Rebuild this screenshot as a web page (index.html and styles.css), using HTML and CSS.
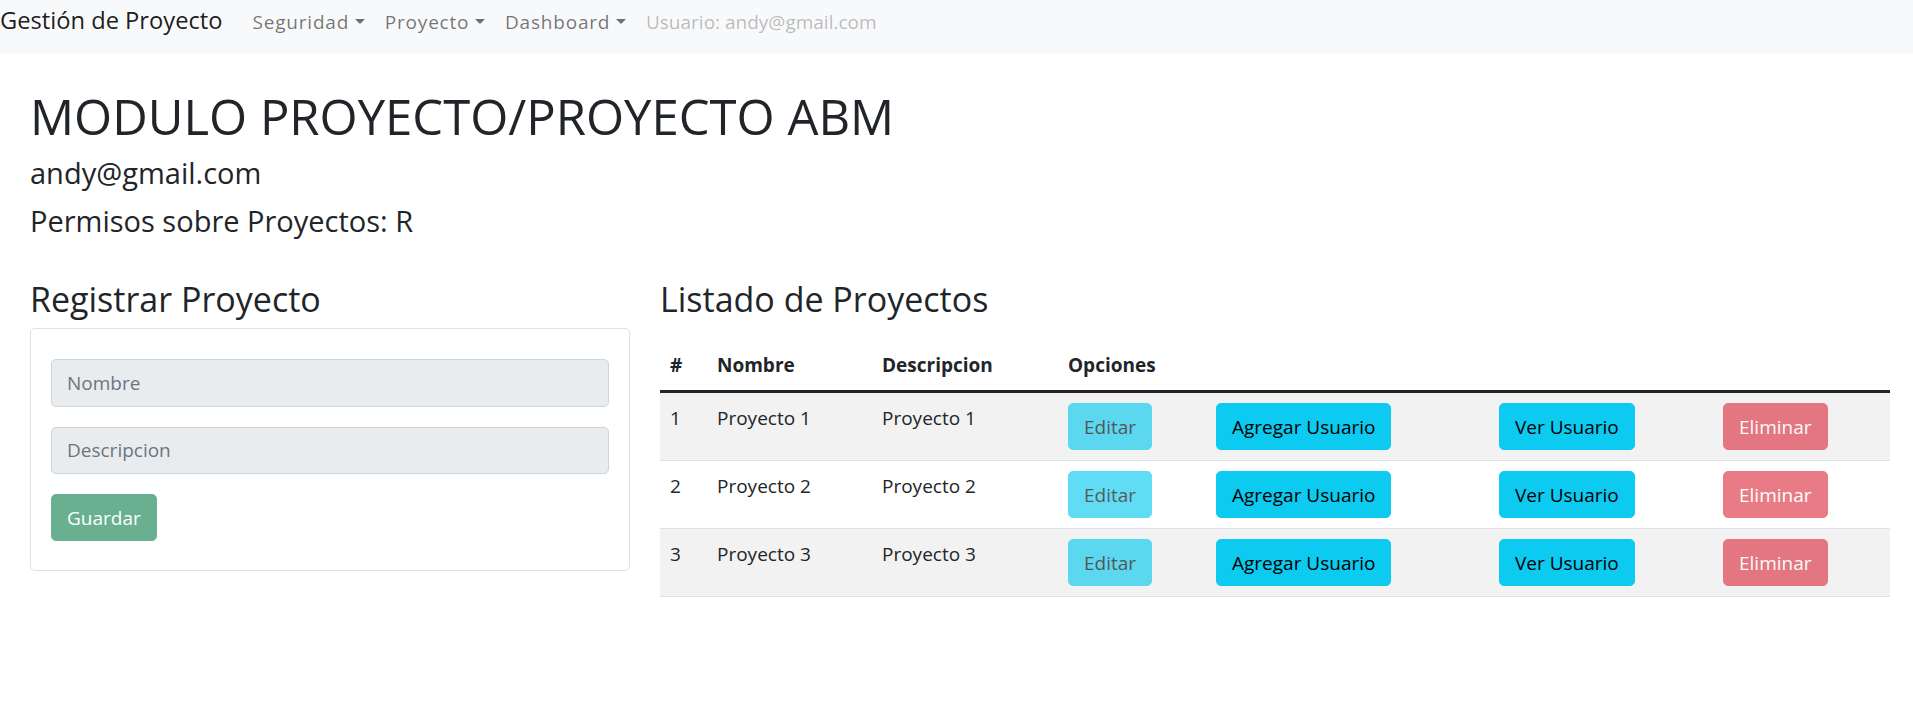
FILE: index.html
```html
<!DOCTYPE html>
<html lang="es">
<head>
<meta charset="utf-8">
<title>Gestión de Proyecto</title>
<link rel="stylesheet" href="styles.css">
</head>
<body>
<nav class="navbar">
  <a class="brand" href="#">Gestión de Proyecto</a>
  <a class="nav-link toggle" href="#">Seguridad</a>
  <a class="nav-link toggle" href="#">Proyecto</a>
  <a class="nav-link toggle" href="#">Dashboard</a>
  <span class="nav-link disabled">Usuario: andy@gmail.com</span>
</nav>

<main class="page">
  <h1 class="title">MODULO PROYECTO/PROYECTO ABM</h1>
  <h4 class="sub sub-user">andy@gmail.com</h4>
  <h4 class="sub">Permisos sobre Proyectos: R</h4>

  <div class="columns">
    <section class="col-left">
      <h3 class="section-title">Registrar Proyecto</h3>
      <div class="card">
        <input class="form-control" type="text" placeholder="Nombre" disabled>
        <input class="form-control" type="text" placeholder="Descripcion" disabled>
        <button class="btn btn-success disabled" type="button">Guardar</button>
      </div>
    </section>

    <section class="col-right">
      <h3 class="section-title">Listado de Proyectos</h3>
      <table class="table">
        <colgroup>
          <col class="c-num"><col class="c-name"><col class="c-desc"><col class="c-edit"><col class="c-add"><col class="c-ver"><col class="c-del">
        </colgroup>
        <thead>
          <tr><th>#</th><th>Nombre</th><th>Descripcion</th><th>Opciones</th><th></th><th></th><th></th></tr>
        </thead>
        <tbody>
          <tr class="striped">
            <td>1</td><td>Proyecto 1</td><td>Proyecto 1</td>
            <td><button class="btn btn-info disabled">Editar</button></td>
            <td><button class="btn btn-info">Agregar Usuario</button></td>
            <td><button class="btn btn-info">Ver Usuario</button></td>
            <td><button class="btn btn-danger disabled">Eliminar</button></td>
          </tr>
          <tr>
            <td>2</td><td>Proyecto 2</td><td>Proyecto 2</td>
            <td><button class="btn btn-info disabled">Editar</button></td>
            <td><button class="btn btn-info">Agregar Usuario</button></td>
            <td><button class="btn btn-info">Ver Usuario</button></td>
            <td><button class="btn btn-danger disabled">Eliminar</button></td>
          </tr>
          <tr class="striped">
            <td>3</td><td>Proyecto 3</td><td>Proyecto 3</td>
            <td><button class="btn btn-info disabled">Editar</button></td>
            <td><button class="btn btn-info">Agregar Usuario</button></td>
            <td><button class="btn btn-info">Ver Usuario</button></td>
            <td><button class="btn btn-danger disabled">Eliminar</button></td>
          </tr>
        </tbody>
      </table>
    </section>
  </div>
</main>
</body>
</html>
```
FILE: styles.css
```css
* { box-sizing: border-box; }

body {
  margin: 0;
  font-family: "Open Sans", "Noto Sans", sans-serif;
  font-size: 19px;
  line-height: 30px;
  color: #212529;
  background: #fff;
}

.navbar {
  height: 54px;
  background: #f8f9fa;
  display: flex;
  align-items: baseline;
  padding-top: 2px;
}

.brand {
  font-size: 23.7px;
  line-height: 36px;
  color: rgba(0, 0, 0, 0.9);
  text-decoration: none;
  margin-right: 20px;
}

.nav-link {
  padding: 0 10px;
  color: rgba(0, 0, 0, 0.55);
  text-decoration: none;
  white-space: nowrap;
}

.nav-link.toggle { letter-spacing: 0.8px; }

.nav-link.disabled { color: rgba(0, 0, 0, 0.27); }

.toggle::after {
  content: "";
  display: inline-block;
  margin-left: 0.3em;
  vertical-align: 0.255em;
  border-top: 0.3em solid;
  border-right: 0.3em solid transparent;
  border-left: 0.3em solid transparent;
  border-bottom: 0;
}

.page {
  padding: 33px 23px 0 30px;
}

.title {
  font-size: 49px;
  font-weight: 500;
  line-height: 1.2;
  margin: 0 0 10px;
}

.sub {
  font-size: 29px;
  font-weight: 500;
  line-height: 1.2;
  margin: 0;
}

.sub-user { margin-bottom: 13px; }

.columns {
  display: grid;
  grid-template-columns: 600px 1fr;
  column-gap: 30px;
  margin-top: 41px;
}

.section-title {
  font-size: 34px;
  font-weight: 500;
  line-height: 1.2;
  margin: 0 0 8px;
}

.card {
  border: 1px solid rgba(0, 0, 0, 0.125);
  border-radius: 5px;
  padding: 30px 20px 29px;
  display: flex;
  flex-direction: column;
  align-items: flex-start;
}

.form-control {
  display: block;
  width: 100%;
  height: 47.5px;
  padding: 7.5px 15px;
  font: inherit;
  font-size: 19px;
  line-height: 30px;
  color: #212529;
  background: #e9ecef;
  border: 1px solid #ced4da;
  border-radius: 5px;
  margin-bottom: 20px;
}

.form-control::placeholder { color: #6c757d; opacity: 1; }

.btn {
  display: inline-block;
  font: inherit;
  font-size: 19px;
  line-height: 30px;
  padding: 7.5px 15px;
  border: 1px solid transparent;
  border-radius: 5px;
  cursor: pointer;
  white-space: nowrap;
}

.btn.disabled { opacity: 0.65; }

.btn-success { background: #198754; border-color: #198754; color: #fff; }
.btn-info { background: #0dcaf0; border-color: #0dcaf0; color: #000; }
.btn-danger { background: #dc3545; border-color: #dc3545; color: #fff; }

.table {
  width: 100%;
  table-layout: fixed;
  border-collapse: collapse;
  margin-top: 20px;
  color: #212529;
}

.c-num { width: 47px; }
.c-name { width: 165px; }
.c-desc { width: 186px; }
.c-edit { width: 148px; }
.c-add { width: 283px; }
.c-ver { width: 224px; }
.c-del { width: 177px; }

.table th,
.table td {
  padding: 10px;
  text-align: left;
  vertical-align: top;
  line-height: 30px;
}

.table th {
  font-weight: 700;
  border-bottom: 3px solid #212529;
}

.table td { border-bottom: 1px solid #dee2e6; }

.table tr.striped td { background: #f2f2f2; }
```
